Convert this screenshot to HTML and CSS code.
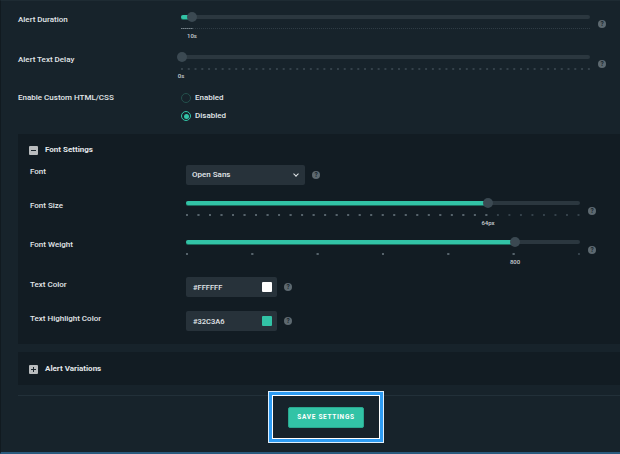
FILE: index.html
```html
<!DOCTYPE html>
<html>
<head>
<meta charset="utf-8">
<link rel="stylesheet" href="styles.css">
</head>
<body>
<div class="page">
  <div class="main">
    <div class="srow">
      <div class="label">Alert Duration</div>
      <div class="slider s-main">
        <div class="track"><div class="fill" style="width:9px"></div></div>
        <div class="ticks dashed"><span class="lit" style="width:12px"></span></div>
        <div class="thumb" style="left:11px"></div>
        <div class="val" style="left:11px">10s</div>
      </div>
      <span class="help">?</span>
    </div>
    <div class="srow">
      <div class="label">Alert Text Delay</div>
      <div class="slider s-main">
        <div class="track"></div>
        <div class="ticks dots60"></div>
        <div class="thumb" style="left:1px"></div>
        <div class="val" style="left:0px">0s</div>
      </div>
      <span class="help">?</span>
    </div>
    <div class="rrow">
      <div class="label">Enable Custom HTML/CSS</div>
      <div class="radios">
        <div class="radio"><span class="rc"></span>Enabled</div>
        <div class="radio"><span class="rc on"></span>Disabled</div>
      </div>
    </div>

    <section class="panel">
      <div class="phead"><span class="tog minus"></span>Font Settings</div>
      <div class="prow r-font">
        <div class="plabel">Font</div>
        <div class="select">Open Sans<span class="chev"></span></div>
        <span class="help">?</span>
      </div>
      <div class="prow r-slider">
        <div class="plabel">Font Size</div>
        <div class="slider s-panel">
          <div class="track"><div class="fill" style="width:302px"></div></div>
          <div class="ticks dots34"><span class="lit lit34" style="width:303px"></span></div>
          <div class="thumb" style="left:302px"></div>
          <div class="val" style="left:302px">64px</div>
        </div>
        <span class="help">?</span>
      </div>
      <div class="prow r-slider">
        <div class="plabel">Font Weight</div>
        <div class="slider s-panel">
          <div class="track"><div class="fill" style="width:329px"></div></div>
          <div class="ticks dots6"><span class="lit lit6" style="width:331px"></span></div>
          <div class="thumb" style="left:329px"></div>
          <div class="val" style="left:329px">800</div>
        </div>
        <span class="help">?</span>
      </div>
      <div class="prow r-color">
        <div class="plabel">Text Color</div>
        <div class="cinput">#FFFFFF<span class="swatch white"></span></div>
        <span class="help">?</span>
      </div>
      <div class="prow r-color r-last">
        <div class="plabel">Text Highlight Color</div>
        <div class="cinput">#32C3A6<span class="swatch green"></span></div>
        <span class="help">?</span>
      </div>
    </section>

    <section class="panel collapsed">
      <div class="phead"><span class="tog plus"></span>Alert Variations</div>
    </section>

    <footer class="footer">
      <div class="focus">
        <button class="save">SAVE SETTINGS</button>
      </div>
    </footer>
  </div>
</div>
</body>
</html>
```

FILE: styles.css
```css
html, body {
  margin: 0;
  padding: 0;
}
body {
  width: 620px;
  height: 454px;
  overflow: hidden;
  background: #17232b;
  font-family: Roboto, "Liberation Sans", sans-serif;
  font-size: 8px;
  font-weight: 500;
  color: #e2e7ea;
}
.page {
  height: 451px;
  border-top: 1px solid #1e2b33;
  border-left: 1px solid #111a20;
  border-bottom: 2px solid #2a5b7e;
}
.main {
  padding: 6px 0 0 17px;
}

/* generic rows */
.srow {
  display: flex;
  height: 40px;
}
.label {
  width: 163px;
  flex: none;
  line-height: 12px;
  padding-top: 7px;
  white-space: nowrap;
}

/* sliders */
.slider {
  position: relative;
  flex: none;
}
.s-main {
  width: 409px;
  padding-top: 8px;
}
.s-panel {
  width: 394px;
  padding-top: 2px;
}
.track {
  height: 4px;
  border-radius: 2px;
  background: #2b373f;
}
.fill {
  height: 100%;
  border-radius: 2px;
  background: #32c3a6;
  box-shadow: 0 1px 0 #1b6e5e;
}
.thumb {
  position: absolute;
  width: 10px;
  height: 10px;
  border-radius: 50%;
  background: #3b4952;
  transform: translateX(-50%);
}
.s-main .thumb { top: 5px; }
.s-panel .thumb { top: -1px; }
.ticks {
  margin-top: 9px;
  height: 2px;
  position: relative;
  background-repeat: repeat-x;
}
.ticks.dashed {
  height: 1px;
  margin-top: 9px;
  background-image: repeating-linear-gradient(to right, #2f3c45 0 1px, transparent 1px 2px);
}
.ticks.dashed .lit {
  position: absolute;
  left: 0;
  top: 0;
  height: 1px;
  background-image: repeating-linear-gradient(to right, #77838b 0 1px, #4d5a62 1px 2px);
}
.ticks.dots60 {
  background-image: linear-gradient(to right, #34414a 1.5px, transparent 1.5px);
  background-size: 6.783px 2px;
}
.ticks.dots34 {
  background-image: linear-gradient(to right, #34414a 1.5px, transparent 1.5px);
  background-size: 11.53px 2px;
}
.ticks.dots6 {
  background-image: linear-gradient(to right, #34414a 1.5px, transparent 1.5px);
  background-size: 65.34px 2px;
}
.lit34, .lit6 {
  position: absolute;
  left: 0;
  top: 0;
  height: 2px;
  background-repeat: repeat-x;
}
.lit34 {
  background-image: linear-gradient(to right, #56636b 1.5px, transparent 1.5px);
  background-size: 11.53px 2px;
}
.lit6 {
  background-image: linear-gradient(to right, #56636b 1.5px, transparent 1.5px);
  background-size: 65.34px 2px;
}
.val {
  position: absolute;
  transform: translateX(-50%);
  font-size: 6px;
  line-height: 7px;
  color: #c9d0d4;
  white-space: nowrap;
}
.s-main .val { top: 25px; }
.s-panel .val { top: 20px; }

/* help icon */
.help {
  flex: none;
  width: 8px;
  height: 8px;
  margin-left: 8px;
  margin-top: 13px;
  border-radius: 50%;
  background: #5d6970;
  color: #17232b;
  font-size: 6.5px;
  font-weight: 700;
  line-height: 8px;
  text-align: center;
}

/* radios */
.rrow {
  display: flex;
  height: 47px;
}
.rrow .label {
  padding-top: 5px;
}
.radios {
  display: flex;
  flex-direction: column;
  gap: 8px;
  padding-top: 6px;
}
.radio {
  display: flex;
  align-items: center;
  height: 10px;
  line-height: 10px;
}
.rc {
  box-sizing: border-box;
  width: 10px;
  height: 10px;
  border-radius: 50%;
  border: 1px solid #24504c;
  margin-right: 4px;
  display: flex;
  align-items: center;
  justify-content: center;
}
.rc.on {
  border: 1.5px solid #32c3a6;
}
.rc.on::after {
  content: "";
  width: 5px;
  height: 5px;
  border-radius: 50%;
  background: #32c3a6;
}

/* panels */
.panel {
  background: #121c23;
  padding: 11px 0 13px 12px;
}
.phead {
  display: flex;
  align-items: center;
  height: 10px;
  line-height: 10px;
  font-weight: 700;
}
.tog {
  width: 9px;
  height: 9px;
  margin-right: 7px;
  margin-left: -1px;
  border-radius: 1px;
  background: #b9bcbe;
  position: relative;
}
.tog::before {
  content: "";
  position: absolute;
  left: 2px;
  top: 4px;
  width: 5px;
  height: 1px;
  background: #1a252c;
}
.tog.plus::after {
  content: "";
  position: absolute;
  left: 4px;
  top: 2px;
  width: 1px;
  height: 5px;
  background: #1a252c;
}
.prow {
  display: flex;
}
.plabel {
  width: 156px;
  flex: none;
  line-height: 12px;
  padding-top: 1px;
  white-space: nowrap;
}
.r-font {
  margin-top: 10px;
  height: 20px;
}
.select {
  box-sizing: border-box;
  width: 119px;
  height: 20px;
  background: #27323a;
  border-radius: 2px;
  padding: 0 6px;
  display: flex;
  align-items: center;
  justify-content: space-between;
  line-height: 20px;
}
.chev {
  width: 3px;
  height: 3px;
  border-right: 1.2px solid #e2e7ea;
  border-bottom: 1.2px solid #e2e7ea;
  transform: rotate(45deg);
  margin-top: -2px;
  margin-right: 1px;
}
.r-font .help { margin-left: 7px; margin-top: 6px; }
.r-slider {
  height: 39px;
}
.r-font + .r-slider {
  margin-top: 14px;
}
.r-slider .help { margin-top: 8px; }
.r-color {
  height: 34px;
}
.r-color .plabel { padding-top: 2px; }
.r-last { height: 20px; }
.cinput {
  box-sizing: border-box;
  width: 91px;
  height: 20px;
  background: #27323a;
  border-radius: 2px;
  padding: 0 5px 0 7px;
  display: flex;
  align-items: center;
  justify-content: space-between;
  font-size: 7.5px;
}
.swatch {
  width: 10px;
  height: 10px;
  border-radius: 1px;
}
.swatch.white { background: #ffffff; }
.swatch.green { background: #32c3a6; }
.r-color .help { margin-left: 7px; margin-top: 6px; }

.panel.collapsed {
  margin-top: 8px;
  padding: 12px 0 11px 12px;
}

/* footer */
.footer {
  margin-top: 10px;
  border-top: 1px solid #223039;
}
.focus {
  box-sizing: border-box;
  margin: -1px 0 0 254px;
  width: 108px;
  height: 44px;
  background: #17232b;
  border: 1px solid #ffffff;
  box-shadow: 0 0 0 3px #2e9cf3, 0 0 0 4px #dfeefb;
  display: flex;
  align-items: center;
  justify-content: center;
}
.save {
  box-sizing: border-box;
  width: 76px;
  height: 21px;
  padding: 0;
  margin: 0;
  background: #32c3a6;
  border: 1px solid #2aa88f;
  border-radius: 2px;
  color: #ffffff;
  font-family: Roboto, "Liberation Sans", sans-serif;
  font-size: 6.5px;
  font-weight: 700;
  letter-spacing: 0.7px;
}
```
